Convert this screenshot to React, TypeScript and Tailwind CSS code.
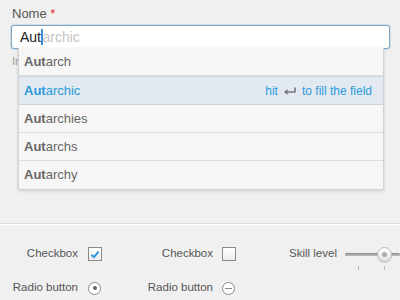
import React from 'react';

const options = ['Autarch', 'Autarchic', 'Autarchies', 'Autarchs', 'Autarchy'];

function ReturnIcon() {
  return (
    <svg width="14" height="10" viewBox="0 0 14 10" className="mx-[5px]">
      <path d="M12 1.5v4.5H3" fill="none" stroke="#777" strokeWidth="1.6" />
      <path d="M1 6l3.5-3v6z" fill="#777" />
    </svg>
  );
}

export default function App() {
  return (
    <div className="w-[400px] h-[300px] overflow-hidden bg-[#f0f0f0] text-[13px] text-[#555]" style={{ fontFamily: '"Liberation Sans", Arial, sans-serif' }}>
      {/* Field */}
      <div className="px-[11px] pt-[5px] relative">
        <div className="pl-[1px] h-[17px] leading-[17px]">
          Nome <span className="text-[#e03030]">*</span>
        </div>
        <div className="mt-[3px] h-[24px] w-[379px] rounded-[3px] border border-[#7ea6c2] bg-white shadow-[0_0_0_1px_rgba(120,160,195,0.25)] flex items-center pl-[8px]">
          <span className="text-[#222] text-[14px]">Aut</span>
          <span className="w-[1.5px] h-[16px] bg-[#3a8fd8]" />
          <span className="text-[#c4c4c4] text-[14px]">archic</span>
        </div>
        <div className="pl-[1px] mt-[4px] text-[11px] text-[#999]">Inserisci il nome completo</div>

        {/* Suggestions */}
        <div className="absolute left-[18px] top-[48px] w-[366px] bg-[#f6f6f6] border border-[#d2d2d2] border-t-0 shadow-[0_1px_3px_rgba(0,0,0,0.15)]">
          {options.map((o, i) => {
            const active = i === 1;
            return (
              <div
                key={o}
                className={
                  active
                    ? 'h-[29px] flex items-center justify-between px-[5px] bg-[#e2e9f1] border-y border-[#c9d4df] text-[#2c9bdb]'
                    : 'h-[28px] flex items-center px-[5px] border-b border-[#dedede] last:border-b-0 text-[#666]'
                }
              >
                <span>
                  <span className="font-bold">Aut</span>
                  {o.slice(3)}
                </span>
                {active && (
                  <span className="flex items-center pr-[6px] text-[12px]">
                    hit <ReturnIcon /> to fill the field
                  </span>
                )}
              </div>
            );
          })}
        </div>
      </div>

      {/* Divider */}
      <div className="mt-[153px] h-[2px] border-t border-[#dcdcdc] border-b border-b-white" />

      {/* Controls */}
      <div className="pt-[21px] text-[11.5px] whitespace-nowrap">
        <div className="flex items-center h-[17px]">
          <span className="w-[78px] text-right">Checkbox</span>
          <span className="ml-[10px] w-[14px] h-[14px] border border-[#8a8a8a] bg-gradient-to-b from-white to-[#ececec] flex items-center justify-center">
            <svg width="10" height="9" viewBox="0 0 10 9">
              <path d="M1.5 4.8l2.4 2.3L8.6 1.6" fill="none" stroke="#2c96dd" strokeWidth="2" />
            </svg>
          </span>
          <span className="w-[111px] text-right">Checkbox</span>
          <span className="ml-[9px] w-[14px] h-[14px] border border-[#8a8a8a] bg-gradient-to-b from-white to-[#ececec]" />
          <span className="ml-[53px] w-[48px]">Skill level</span>
          <div className="ml-[8px] flex-1 relative h-[17px]">
            <div className="absolute left-0 right-0 top-[7px] h-[3px] rounded-full bg-[#b5b5b5] shadow-[inset_0_1px_1px_rgba(0,0,0,0.25)]" />
            <div className="absolute left-[32px] top-[1px] w-[15px] h-[15px] rounded-full border border-[#b9b9b9] bg-gradient-to-b from-white to-[#e2e2e2] flex items-center justify-center shadow-[0_1px_1px_rgba(0,0,0,0.15)]">
              <span className="w-[5px] h-[5px] rounded-full bg-[#aaa]" />
            </div>
            <div className="absolute left-[13px] top-[20px] w-px h-[4px] bg-[#bbb]" />
            <div className="absolute left-[39px] top-[20px] w-px h-[4px] bg-[#bbb]" />
          </div>
        </div>
        <div className="flex items-center h-[17px] mt-[17px]">
          <span className="w-[78px] text-right">Radio button</span>
          <span className="ml-[10px] w-[13px] h-[13px] rounded-full border border-[#8a8a8a] bg-white flex items-center justify-center">
            <span className="w-[4px] h-[4px] rounded-full bg-[#666]" />
          </span>
          <span className="w-[112px] text-right">Radio button</span>
          <span className="ml-[9px] w-[13px] h-[13px] rounded-full border border-[#8a8a8a] bg-white flex items-center justify-center">
            <span className="w-[7px] h-px bg-[#888]" />
          </span>
        </div>
      </div>
    </div>
  );
}
